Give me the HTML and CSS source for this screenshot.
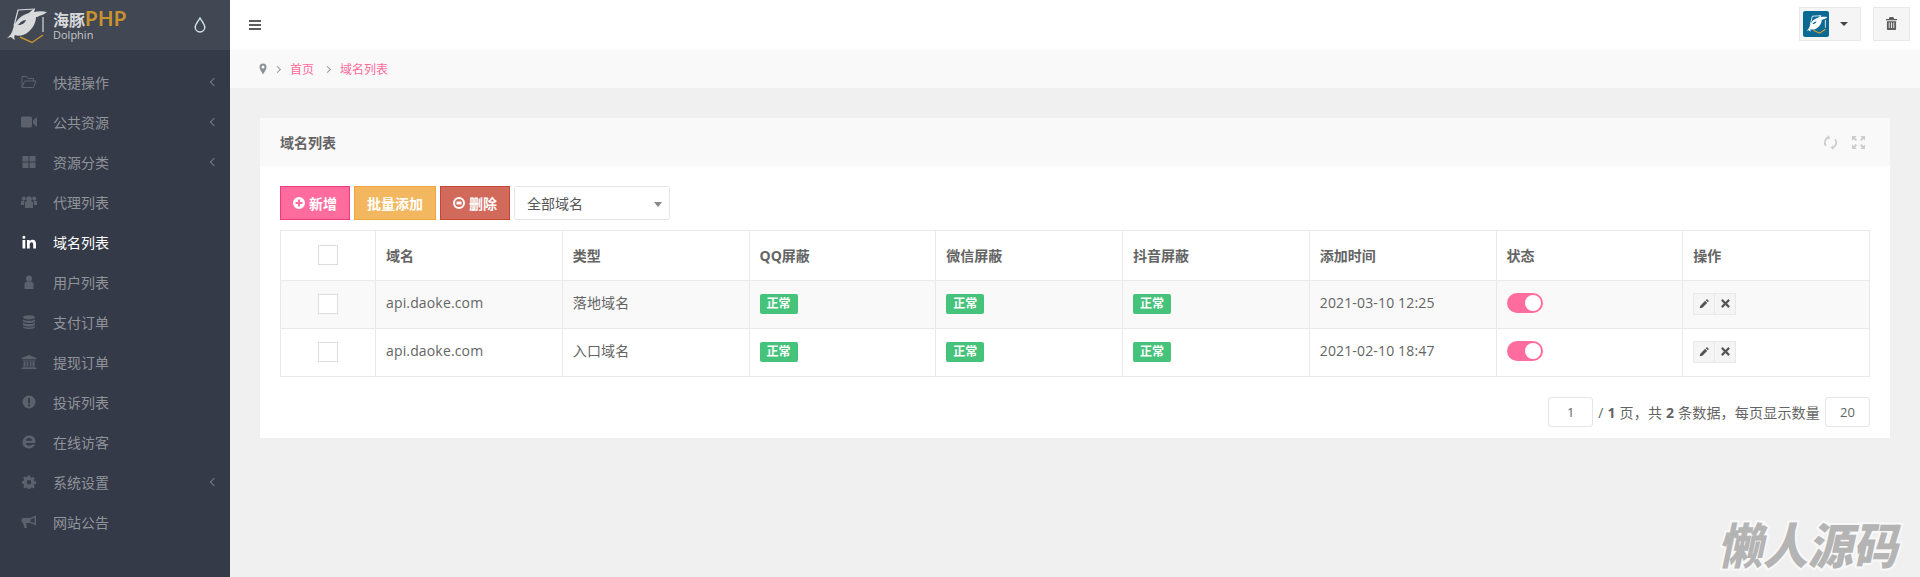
FILE: index.html
```html
<!DOCTYPE html>
<html lang="zh-CN">
<head>
    <meta charset="UTF-8">
    <title>域名列表</title>
    <link rel="stylesheet" href="styles.css">
</head>
<body>
    <svg class="sprite" xmlns="http://www.w3.org/2000/svg">
        <symbol id="i-pencil" viewBox="0 0 16 16"><path d="M11.500 1.500l3 3-1.600 1.600-3-3zM8.900 4.100l3 3-7 7-3.900.9.900-3.900z"/></symbol>
        <symbol id="i-times" viewBox="0 0 16 16"><path d="M3.900 1.600L8 5.700l4.100-4.100 2.300 2.300L10.300 8l4.100 4.100-2.300 2.300L8 10.300l-4.100 4.100-2.300-2.300L5.700 8 1.600 3.900z"/></symbol>
        <symbol id="i-dolphin" viewBox="0 0 50 50">
            <path fill-rule="evenodd" d="M7 38c3-2 5-5 6-9 2-8 8-14 16-16 2-2 4-4 6-4l-1 3c4-1 9-1 13 0-2 2-5 3-8 4-1 1-2 1-3 1 0 7-5 15-13 18-3 1-6 1-8 0-1 1-1 3 0 5-2-1-3-2-4-3-1 0-3 1-4 1zM18 25c3-4 6-5 8-5-1 3-4 5-8 5z"/>
        </symbol>
    </svg>

    <div class="layout">
        <aside class="sidebar">
            <div class="brand">
                <svg class="brand-logo" viewBox="0 0 50 50">
                    <path d="M14 26l4-16 17-1M43 17v15" fill="none" stroke="#d8d9db" stroke-width="1.200"/>
                    <path d="M20 37l12 5.500 11-7.500" fill="none" stroke="#c8922f" stroke-width="1.500"/>
                    <use href="#i-dolphin" fill="#d8d9db"/>
                </svg>
                <div class="brand-text">
                    <div class="brand-name">海豚<span class="brand-php">PHP</span></div>
                    <div class="brand-sub">Dolphin</div>
                </div>
                <svg class="brand-drop" viewBox="0 0 12 16"><path d="M6 1C4.500 4 1.200 7 1.200 10.200a4.800 4.800 0 0 0 9.600 0C10.800 7 7.500 4 6 1z" fill="none" stroke="#d5e3ea" stroke-width="1.400"/></svg>
            </div>
            <nav class="nav">
                <a class="nav-item">
                    <svg class="nav-icon" viewBox="0 0 16 14"><path d="M1 12.500V1.500h4.500l1.500 2h5.500v2.500M1 12.500l2.500-6.500H15l-2.500 6.500z" fill="none" stroke="currentColor"/></svg>
                    <span>快捷操作</span><i class="chevron"></i>
                </a>
                <a class="nav-item">
                    <svg class="nav-icon" viewBox="0 0 16 14"><path d="M0 3a1.500 1.500 0 0 1 1.500-1.500h8A1.500 1.500 0 0 1 11 3v8a1.500 1.500 0 0 1-1.500 1.500h-8A1.500 1.500 0 0 1 0 11zM12 5.500l4-3.500v10l-4-3.500z"/></svg>
                    <span>公共资源</span><i class="chevron"></i>
                </a>
                <a class="nav-item">
                    <svg class="nav-icon" viewBox="0 0 16 14"><path d="M1.500 1h6v5.500h-6zM8.500 1h6v5.500h-6zM1.500 7.500h6V13h-6zM8.500 7.500h6V13h-6z"/></svg>
                    <span>资源分类</span><i class="chevron"></i>
                </a>
                <a class="nav-item">
                    <svg class="nav-icon" viewBox="0 0 16 14"><circle cx="8" cy="4" r="2.800"/><circle cx="2.800" cy="3.500" r="2"/><circle cx="13.200" cy="3.500" r="2"/><path d="M4 8c0-1 1-2 2-2h4c1 0 2 1 2 2v5H4zM0 6.500C0 6 .6 5.800 1 5.800h2.500L3 10H0zM16 6.500c0-.5-.6-.7-1-.7h-2.500L13 10h3z"/></svg>
                    <span>代理列表</span>
                </a>
                <a class="nav-item active">
                    <svg class="nav-icon" viewBox="0 0 16 14"><path d="M1.500 5h2.800v8.500H1.500zM2.900.8a1.500 1.500 0 1 1 0 3 1.500 1.500 0 0 1 0-3zM6 5h2.700v1.200c.5-.8 1.500-1.400 2.800-1.400 2.700 0 3.500 1.700 3.500 4.200v4.500h-2.800V9.500c0-1.100-.3-2.200-1.600-2.200-1.300 0-1.800 1-1.800 2.200v4H6z"/></svg>
                    <span>域名列表</span>
                </a>
                <a class="nav-item">
                    <svg class="nav-icon" viewBox="0 0 16 14"><circle cx="8" cy="3.500" r="3"/><path d="M3.500 9c0-1.500 1.500-2.500 2.500-2.500h4c1 0 2.500 1 2.500 2.500v5h-9z"/></svg>
                    <span>用户列表</span>
                </a>
                <a class="nav-item">
                    <svg class="nav-icon" viewBox="0 0 16 14"><ellipse cx="8" cy="2.300" rx="6" ry="2.100"/><path d="M2 4.200c1 1 3 1.500 6 1.500s5-.5 6-1.500v1.900c0 1.100-2.700 2-6 2s-6-.9-6-2zM2 7.600c1 1 3 1.500 6 1.500s5-.5 6-1.500v1.900c0 1.100-2.700 2-6 2s-6-.9-6-2zM2 11c1 1 3 1.400 6 1.400s5-.4 6-1.400v1c0 1.100-2.700 2-6 2s-6-.9-6-2z"/></svg>
                    <span>支付订单</span>
                </a>
                <a class="nav-item">
                    <svg class="nav-icon" viewBox="0 0 16 14"><path d="M8 0l7.500 3v1h-15V3zM1.500 4.800h13v.8h-13zM2.500 6.200h2v5h-2zM5.600 6.200h1.600v5H5.600zM8.800 6.200h1.600v5H8.800zM11.500 6.200h2v5h-2zM1.500 11.800h13v1H1.500zM.5 13h15v1H.5z"/></svg>
                    <span>提现订单</span>
                </a>
                <a class="nav-item">
                    <svg class="nav-icon" viewBox="0 0 16 14"><path fill-rule="evenodd" d="M8 .5a6.500 6.500 0 1 1 0 13 6.500 6.500 0 0 1 0-13zM7 3l.2 5.500h1.600L9 3zM7 9.500v1.800h2V9.500z"/></svg>
                    <span>投诉列表</span>
                </a>
                <a class="nav-item">
                    <svg class="nav-icon" viewBox="1.500 .5 13.500 13.500"><path fill-rule="evenodd" d="M8.500 1c3.700 0 6 2.500 6 6.500v.8H5.300c.2 1.700 1.500 2.500 3 2.500 1.400 0 2.400-.4 3.200-1.100h2.700c-1 2.300-3.200 3.800-6 3.800C4.400 13.500 2 11 2 7.600c0-3 2-5.500 4.500-6.300zM5.400 6h5.900c-.2-1.500-1.300-2.500-3-2.500-1.600 0-2.700 1-2.900 2.500z"/></svg>
                    <span>在线访客</span>
                </a>
                <a class="nav-item">
                    <svg class="nav-icon" viewBox="0 0 16 14"><path fill-rule="evenodd" d="M6.800.5h2.400l.3 1.800 1.200.5 1.500-1 1.600 1.700-1 1.500.5 1.200 1.800.3v2.400l-1.800.3-.5 1.200 1 1.500-1.600 1.600-1.500-1-1.200.5-.3 1.500H6.800l-.3-1.500-1.200-.5-1.500 1-1.600-1.600 1-1.500-.5-1.200L.9 8.400V6l1.800-.3.5-1.200-1-1.500 1.600-1.700 1.500 1 1.200-.5zM8 5a2.200 2.200 0 1 0 0 4.400A2.200 2.200 0 0 0 8 5z"/></svg>
                    <span>系统设置</span><i class="chevron"></i>
                </a>
                <a class="nav-item">
                    <svg class="nav-icon" viewBox="0 0 16 14"><path fill-rule="evenodd" d="M15 .5v10L9 8H5l1 5H3.500L2 8C1 8 .5 7 .5 5.500S1 3 2 3h7zM13.500 2.800L9.500 4.400v2.300l4 1.600z"/></svg>
                    <span>网站公告</span>
                </a>
            </nav>
        </aside>

        <div class="content">
            <header class="topbar">
                <div class="menu-toggle"><span></span><span></span><span></span></div>
                <div class="top-actions">
                    <div class="top-btn user-btn">
                        <div class="avatar">
                            <svg viewBox="0 0 50 50" width="26" height="26">
                                <path d="M14 26l4-16 17-1M43 17v15" fill="none" stroke="#fff" stroke-width="1.600"/>
                                <path d="M20 37l12 5.500 11-7.500" fill="none" stroke="#e0a030" stroke-width="2"/>
                                <use href="#i-dolphin" fill="#fff"/>
                            </svg>
                        </div>
                        <i class="caret"></i>
                    </div>
                    <div class="top-btn trash-btn">
                        <svg viewBox="0 0 12 14" width="11" height="13"><path fill-rule="evenodd" fill="#5c5c5c" d="M4 0h4l1 2h3v1.500H0V2h3zM1 4.500h10V13a1 1 0 0 1-1 1H2a1 1 0 0 1-1-1zM3 6v6h1V6zM5.500 6v6h1V6zM8 6v6h1V6z"/></svg>
                    </div>
                </div>
            </header>

            <div class="breadcrumb">
                <svg class="crumb-pin" viewBox="0 0 8 12"><path fill-rule="evenodd" d="M4 .5A3.500 3.500 0 0 1 7.500 4C7.500 6.500 5 9.500 4 11.500 3 9.500.5 6.500.5 4A3.500 3.500 0 0 1 4 .5zM4 2.500a1.500 1.500 0 1 0 0 3 1.500 1.500 0 0 0 0-3z"/></svg>
                <i class="crumb-sep"></i>
                <a class="crumb-link">首页</a>
                <i class="crumb-sep"></i>
                <a class="crumb-link">域名列表</a>
            </div>

            <main class="page">
                <section class="card">
                    <div class="card-head">
                        <h3 class="card-title">域名列表</h3>
                        <div class="card-tools">
                            <svg viewBox="0 0 16 16" width="15" height="15"><path d="M3 11.500A6 6 0 0 1 6 2.300M13 4.500a6 6 0 0 1-3 9.200" fill="none" stroke="#ccc" stroke-width="1.800"/><path d="M5 0l3 2.800L5 5zM11 16l-3-2.800L11 11z" fill="#ccc"/></svg>
                            <svg viewBox="0 0 16 16" width="15" height="15"><path d="M1 1h5L4.300 2.700 6.500 5 5 6.500 2.700 4.300 1 6zM15 1v5l-1.700-1.700L11 6.500 9.500 5l2.200-2.300L10 1zM1 15v-5l1.700 1.700L5 9.500 6.500 11l-2.200 2.300L6 15zM15 15h-5l1.700-1.700L9.500 11 11 9.500l2.300 2.200L15 10z" fill="#ccc"/></svg>
                        </div>
                    </div>
                    <div class="card-body">
                        <div class="toolbar">
                            <a class="btn btn-pink">
                                <svg viewBox="0 0 12 12" width="12" height="12"><path fill-rule="evenodd" fill="#fff" d="M6 0a6 6 0 1 1 0 12A6 6 0 0 1 6 0zM5 2.500V5H2.500v2H5v2.500h2V7h2.500V5H7V2.500z"/></svg>
                                新增
                            </a>
                            <a class="btn btn-orange">批量添加</a>
                            <a class="btn btn-red">
                                <svg viewBox="0 0 12 12" width="12" height="12"><path fill-rule="evenodd" fill="#fff" d="M6 0a6 6 0 1 1 0 12A6 6 0 0 1 6 0zM6 2a4 4 0 1 0 0 8 4 4 0 0 0 0-8zM3.500 4.500h5v3h-5z"/></svg>
                                删除
                            </a>
                            <div class="select">全部域名<i class="select-caret"></i></div>
                        </div>

                        <table class="table">
                            <colgroup>
                                <col class="col-check">
                                <col><col><col><col><col><col><col><col>
                            </colgroup>
                            <thead>
                                <tr>
                                    <th class="cell-check"><span class="checkbox"></span></th>
                                    <th>域名</th>
                                    <th>类型</th>
                                    <th>QQ屏蔽</th>
                                    <th>微信屏蔽</th>
                                    <th>抖音屏蔽</th>
                                    <th>添加时间</th>
                                    <th>状态</th>
                                    <th>操作</th>
                                </tr>
                            </thead>
                            <tbody>
                                <tr class="striped">
                                    <td class="cell-check"><span class="checkbox"></span></td>
                                    <td class="cell-text">api.daoke.com</td>
                                    <td class="cell-text">落地域名</td>
                                    <td><span class="badge">正常</span></td>
                                    <td><span class="badge">正常</span></td>
                                    <td><span class="badge">正常</span></td>
                                    <td class="cell-text">2021-03-10 12:25</td>
                                    <td><span class="switch"></span></td>
                                    <td>
                                        <div class="row-actions">
                                            <a><svg><use href="#i-pencil"/></svg></a>
                                            <a><svg><use href="#i-times"/></svg></a>
                                        </div>
                                    </td>
                                </tr>
                                <tr>
                                    <td class="cell-check"><span class="checkbox"></span></td>
                                    <td class="cell-text">api.daoke.com</td>
                                    <td class="cell-text">入口域名</td>
                                    <td><span class="badge">正常</span></td>
                                    <td><span class="badge">正常</span></td>
                                    <td><span class="badge">正常</span></td>
                                    <td class="cell-text">2021-02-10 18:47</td>
                                    <td><span class="switch"></span></td>
                                    <td>
                                        <div class="row-actions">
                                            <a><svg><use href="#i-pencil"/></svg></a>
                                            <a><svg><use href="#i-times"/></svg></a>
                                        </div>
                                    </td>
                                </tr>
                            </tbody>
                        </table>

                        <div class="pager">
                            <div class="pager-input">1</div>
                            <span class="pager-text">/ <b>1</b> 页，共 <b>2</b> 条数据，每页显示数量</span>
                            <div class="pager-input pager-size">20</div>
                        </div>
                    </div>
                </section>
            </main>
        </div>
    </div>

    <div class="watermark">懒人源码</div>
</body>
</html>
```

FILE: styles.css
```css
* {
    box-sizing: border-box;
}

html,
body {
    height: 100%;
}

body {
    margin: 0;
    font-family: "Open Sans", "Noto Sans CJK SC", sans-serif;
    font-size: 14px;
    color: #646464;
    background-color: #f0f0f0;
    overflow: hidden;
}

.sprite {
    display: none;
}

.layout {
    display: flex;
    min-height: 100vh;
}

/* sidebar */
.sidebar {
    width: 230px;
    flex-shrink: 0;
    background-color: #343a47;
}

.brand {
    height: 50px;
    display: flex;
    align-items: center;
    background-color: #414753;
}

.brand-logo {
    width: 50px;
    height: 50px;
    flex-shrink: 0;
}

.brand-text {
    margin-left: 3px;
    width: 100px;
    color: #d8d9db;
}

.brand-name {
    height: 17px;
    font-size: 16px;
    font-weight: 700;
    line-height: 17px;
    white-space: nowrap;
}

.brand-php {
    font-family: Lato, sans-serif;
    font-size: 20px;
    font-weight: 700;
    letter-spacing: .5px;
    line-height: 17px;
    color: #c8922f;
}

.brand-sub {
    margin-top: 3px;
    font-size: 11px;
    line-height: 10px;
    color: #c5c7cb;
}

.brand-drop {
    width: 12px;
    height: 16px;
    margin-left: 41px;
}

.nav {
    padding-top: 12px;
}

.nav-item {
    height: 40px;
    display: flex;
    align-items: center;
    position: relative;
    padding-left: 21px;
    color: #90939a;
    cursor: pointer;
}

.nav-item span {
    margin-left: 16px;
}

.nav-icon {
    width: 16px;
    height: 14px;
    fill: #5d616c;
    color: #5d616c;
}

.nav-item.active {
    color: #fff;
}

.nav-item.active .nav-icon {
    fill: #fff;
}

.chevron {
    position: absolute;
    right: 13px;
    top: 17px;
    width: 6px;
    height: 6px;
    border-left: 1px solid #777b84;
    border-bottom: 1px solid #777b84;
    transform: rotate(45deg);
}

/* main column */
.content {
    flex: 1;
    min-width: 0;
}

.topbar {
    height: 50px;
    display: flex;
    align-items: center;
    justify-content: space-between;
    padding: 0 10px 0 19px;
    background-color: #fff;
}

.menu-toggle {
    display: flex;
    flex-direction: column;
    gap: 2px;
    width: 12px;
}

.menu-toggle span {
    height: 2px;
    background-color: #5c5c5c;
}

.top-actions {
    display: flex;
    gap: 12px;
    margin-top: -3px;
}

.top-btn {
    height: 34px;
    display: flex;
    align-items: center;
    justify-content: center;
    background-color: #f5f5f5;
    border: 1px solid #e9e9e9;
}

.user-btn {
    width: 62px;
    justify-content: flex-start;
    padding-left: 3px;
}

.trash-btn {
    width: 37px;
}

.avatar {
    width: 26px;
    height: 26px;
    display: flex;
    align-items: center;
    justify-content: center;
    border-radius: 2px;
    background-color: #0b6a94;
}

.caret {
    margin-left: 11px;
    border-top: 4px solid #444;
    border-left: 4px solid transparent;
    border-right: 4px solid transparent;
}

.breadcrumb {
    height: 38px;
    display: flex;
    align-items: center;
    padding-left: 29px;
    font-size: 12px;
    background-color: #f9f9f9;
}

.crumb-pin {
    width: 8px;
    height: 12px;
    fill: #8c8f94;
}

.crumb-sep {
    width: 5px;
    height: 5px;
    margin: 0 10px 0 8px;
    border-top: 1px solid #999;
    border-right: 1px solid #999;
    transform: rotate(45deg);
}

.crumb-link {
    color: #ff6b9b;
    margin-right: 3px;
}

.page {
    padding: 30px 30px 0;
}

/* card */
.card {
    background-color: #fff;
}

.card-head {
    height: 48px;
    display: flex;
    align-items: center;
    justify-content: space-between;
    padding: 0 24px 0 20px;
    background-color: #f9f9f9;
}

.card-title {
    margin: 0;
    font-size: 14px;
    font-weight: 700;
}

.card-tools {
    display: flex;
    gap: 13px;
}

.card-body {
    padding: 20px 20px 11px;
}

.toolbar {
    display: flex;
    gap: 4px;
    margin-bottom: 10px;
}

.btn {
    height: 34px;
    display: flex;
    align-items: center;
    justify-content: center;
    gap: 4px;
    padding: 0 12px;
    font-weight: 700;
    color: #fff;
    border: 1px solid;
    cursor: pointer;
}

.btn-pink {
    width: 70px;
    background-color: #ff6c9d;
    border-color: #f2397c;
}

.btn-orange {
    width: 82px;
    background-color: #f3b760;
    border-color: #f0a53c;
}

.btn-red {
    width: 70px;
    background-color: #d26a5c;
    border-color: #c54736;
}

.select {
    width: 156px;
    height: 34px;
    display: flex;
    align-items: center;
    position: relative;
    padding-left: 12px;
    border: 1px solid #e6e6e6;
    border-radius: 3px;
    background-color: #fff;
    color: #555;
}

.select-caret {
    position: absolute;
    right: 7px;
    top: 15px;
    border-top: 5px solid #888;
    border-left: 4px solid transparent;
    border-right: 4px solid transparent;
}

/* table */
.table {
    width: 1590px;
    table-layout: fixed;
    border-collapse: collapse;
}

.col-check {
    width: 95px;
}

.table th,
.table td {
    padding: 0 10px 2px;
    border: 1px solid #e9e9e9;
    text-align: left;
    vertical-align: middle;
}

.table th {
    height: 50px;
    font-weight: 700;
}

.table td {
    height: 48px;
}

.table .cell-text {
    padding-bottom: 5px;
    letter-spacing: .15px;
}

.table .cell-check {
    padding-right: 11px;
}

.striped {
    background-color: #f9f9f9;
}

.checkbox {
    display: block;
    width: 20px;
    height: 20px;
    margin: 0 auto;
    background-color: #fff;
    border: 1px solid #ddd;
}

.badge {
    display: block;
    width: 38px;
    height: 20px;
    line-height: 20px;
    text-align: center;
    font-size: 12px;
    font-weight: 700;
    color: #fff;
    background-color: #46c37b;
    border-radius: 2px;
}

.switch {
    display: block;
    position: relative;
    width: 36px;
    height: 20px;
    margin-bottom: 2px;
    border-radius: 10px;
    background-color: #ff6c9d;
}

.switch::after {
    content: "";
    position: absolute;
    right: 2px;
    top: 2px;
    width: 16px;
    height: 16px;
    border-radius: 50%;
    background-color: #fff;
}

.row-actions {
    display: flex;
}

.row-actions a {
    width: 22px;
    height: 22px;
    display: flex;
    align-items: center;
    justify-content: center;
    margin-left: -1px;
    background-color: #f5f5f5;
    border: 1px solid #e9e9e9;
}

.row-actions a:first-child {
    margin-left: 0;
}

.row-actions svg {
    width: 11px;
    height: 11px;
    fill: #555;
}

/* pager */
.pager {
    display: flex;
    align-items: center;
    justify-content: flex-end;
    gap: 5px;
    margin-top: 20px;
    height: 30px;
}

.pager-input {
    width: 45px;
    height: 30px;
    line-height: 28px;
    text-align: center;
    font-size: 13px;
    background-color: #fff;
    border: 1px solid #e6e6e6;
    border-radius: 3px;
}

.pager-text {
    letter-spacing: .2px;
}

.pager-text b {
    font-weight: 700;
}

/* site watermark */
.watermark {
    position: absolute;
    right: 18px;
    bottom: 9px;
    font-family: "Noto Sans CJK SC", sans-serif;
    font-size: 45px;
    font-weight: 900;
    line-height: 50px;
    color: #b4b4b4;
    transform: skewX(-12deg) scale(1, 1.08);
    -webkit-text-stroke: 4px #f8f8f8;
    paint-order: stroke fill;
}
```
